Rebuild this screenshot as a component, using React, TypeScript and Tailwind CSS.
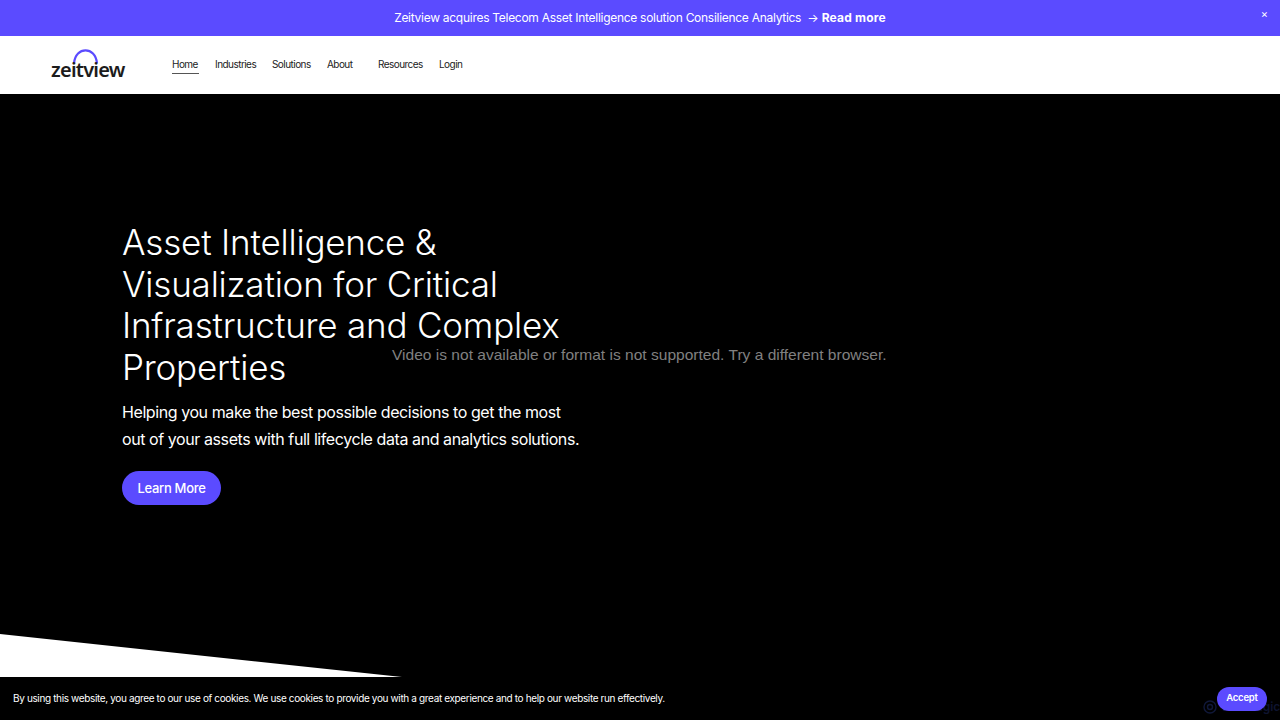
const navItems = [
  { label: "Home", className: "w-[27px] border-b border-[#555]" },
  { label: "Industries", className: "ml-[16px] w-[41px] border-b border-transparent" },
  { label: "Solutions", className: "ml-[16px] w-[39px] border-b border-transparent" },
  { label: "About", className: "ml-[16px] w-[28px] border-b border-transparent" },
  { label: "Resources", className: "ml-[23px] w-[45px] border-b border-transparent" },
  { label: "Login", className: "ml-[16px] w-[24px] border-b border-transparent" },
];

function Logo() {
  return (
    <div className="relative w-[75px] h-[27px]">
      <svg className="absolute left-[21px] top-[-3px]" width="28" height="15" viewBox="0 0 28 15" fill="none">
        <path d="M2 14 C3 5.5 8 1.3 13.5 1.3 C19 1.3 24 5.5 25 14" stroke="#5b4bff" strokeWidth="2.2" />
      </svg>
      <div className="absolute left-0 bottom-[-1px] text-[20px] leading-[20px] font-semibold tracking-[-0.75px] text-[#1c1c1c] font-['Noto_Sans',sans-serif]">
        zeitview
      </div>
    </div>
  );
}

export default function App() {
  return (
    <div className="relative w-[1280px] h-[720px] overflow-hidden bg-black font-['Inter','Noto_Sans',sans-serif]">
      {/* Announcement */}
      <div className="relative flex items-center justify-center h-9 bg-[#5b4bff] text-white text-[12px]">
        <span className="tracking-[-0.28px]">Zeitview acquires Telecom Asset Intelligence solution Consilience Analytics</span>
        <span className="ml-[6px]">→</span>
        <span className="ml-[3px] font-bold tracking-[0.2px]">Read more</span>
        <span className="absolute right-[12px] top-[6px] text-[11px] leading-4">×</span>
      </div>

      {/* Nav */}
      <header className="flex items-center h-[58px] bg-white pl-[51px]">
        <Logo />
        <nav className="flex items-center ml-[46px] text-[10px] leading-[14px] tracking-[-0.55px] text-[#222] whitespace-nowrap">
          {navItems.map((item) => (
            <a key={item.label} className={`pt-[1px] pb-[2px] ${item.className}`}>
              {item.label}
            </a>
          ))}
        </nav>
      </header>

      {/* Hero */}
      <main className="pl-[122px] pt-[128px] text-white">
        <h1 className="w-[480px] text-[35px] leading-[41.6px] font-light tracking-[-0.2px]">
          Asset Intelligence &amp; Visualization for Critical Infrastructure and Complex Properties
        </h1>
        <p className="mt-[11px] text-[16px] leading-[27px] tracking-[-0.42px] whitespace-nowrap">
          Helping you make the best possible decisions to get the most
          <br />
          out of your assets with full lifecycle data and analytics solutions.
        </p>
        <button className="mt-[18px] w-[99px] h-[34px] rounded-[17px] bg-[#5b4bff] text-white text-[13px] tracking-[-0.3px] font-medium">
          Learn More
        </button>
      </main>

      {/* Video fallback */}
      <div className="absolute left-[392px] top-[346px] text-[15.56px] leading-[18px] text-[#808080] font-['Liberation_Sans',sans-serif] whitespace-nowrap">
        Video is not available or format is not supported. Try a different browser.
      </div>

      {/* Diagonal */}
      <svg className="absolute left-0 top-[634px]" width="402" height="43" viewBox="0 0 402 43">
        <polygon points="0,0 402,43 0,43" fill="#fff" />
      </svg>

      {/* Cookie bar */}
      <div className="absolute left-0 right-0 bottom-0 h-[43px] flex items-center justify-between bg-black pl-[13px] pr-[13px] text-white">
        <span className="text-[10px] tracking-[-0.36px]">
          By using this website, you agree to our use of cookies. We use cookies to provide you with a great experience and to help our website run effectively.
        </span>
        <button className="relative z-10 w-[50px] h-[24px] rounded-full bg-[#5b4bff] text-[9.5px] tracking-[-0.2px] font-semibold">
          Accept
        </button>
      </div>

      {/* Faint badge behind the accept button */}
      <div className="absolute left-[1203px] top-[700px] flex items-center gap-[3px] text-[12px] leading-[14px] font-semibold text-[#0e1430]">
        <svg width="14" height="14" viewBox="0 0 14 14" fill="none" stroke="#10183a" strokeWidth="1.4">
          <circle cx="7" cy="7" r="6" />
          <circle cx="7" cy="7" r="2.5" />
        </svg>
        <span>ToolMagic</span>
      </div>
    </div>
  );
}
